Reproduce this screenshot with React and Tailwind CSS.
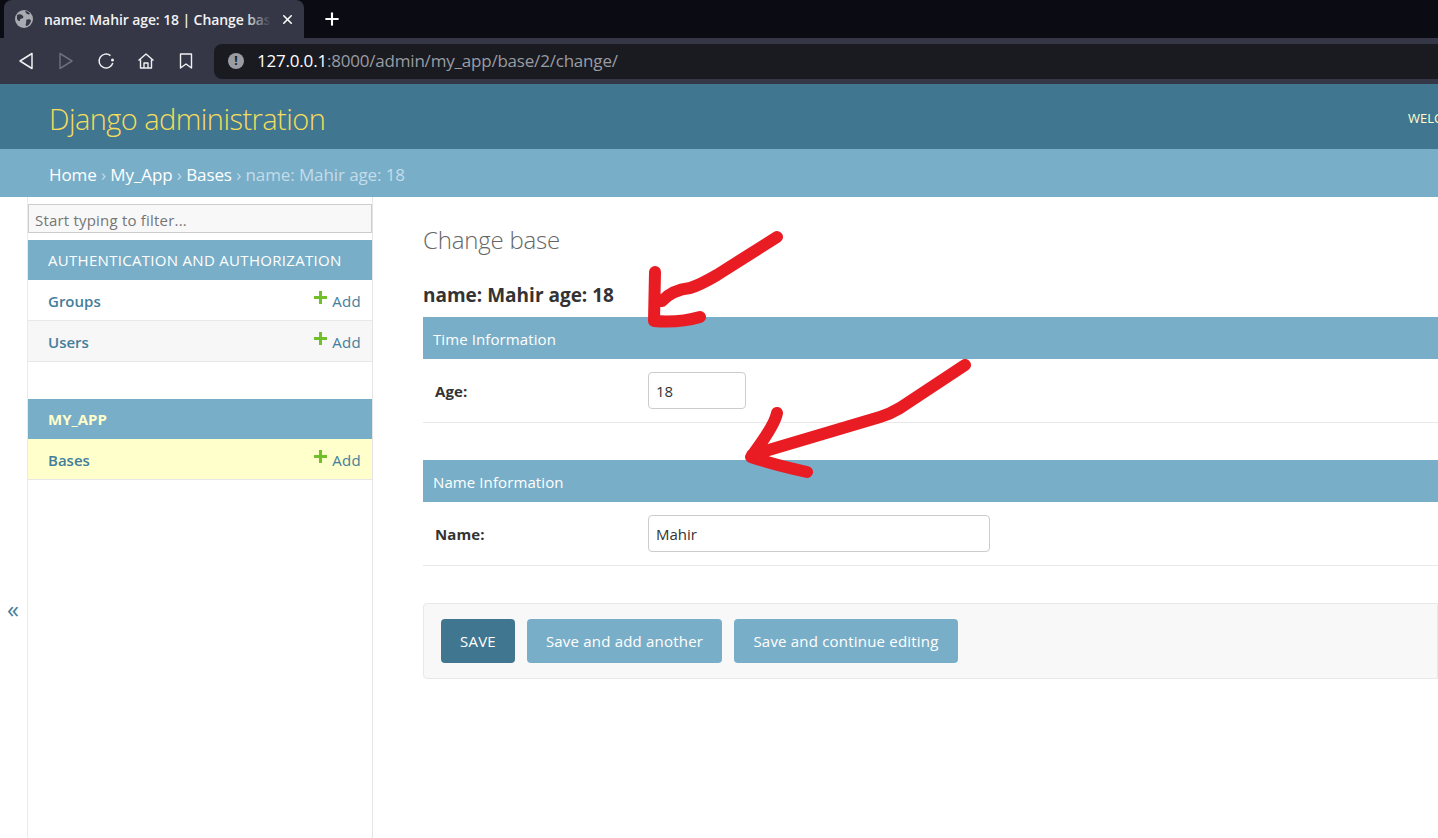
import { X, Plus } from "lucide-react";

const font = "font-['Open_Sans','Noto_Sans',sans-serif]";

function Toolbar() {
  return (
    <div>
      {/* Tab strip */}
      <div className="h-[38px] bg-[#0b0b14] flex items-end pl-1">
        <div className="w-[300px] h-[38px] bg-[#353746] rounded-t-lg flex items-center pl-[11px] pr-[9px]">
          <svg width="18" height="18" viewBox="0 0 18 18" className="shrink-0">
            <circle cx="9" cy="9" r="9" fill="#a9abb2" />
            <path d="M2 5c2-1 4-1 5 0s2 2 1 3-3 0-3 2-2 1-3-1zM11 10c2-1 5-1 5 1-1 3-3 5-5 5-1-2 1-3 0-6zM10 1c2 0 4 1 5 3-2 1-3 0-4-1z" fill="#353746" />
          </svg>
          <div className="relative ml-[11px]">
            <span className="block whitespace-nowrap text-[14px] font-semibold text-[#f2f2f4] tracking-[-0.1px]">
              name: Mahir age: 18 | Change bas
            </span>
            <div className="absolute right-0 top-0 bottom-0 w-[26px] bg-gradient-to-r from-transparent to-[#353746]" />
          </div>
          <X size={15} strokeWidth={2.5} className="ml-auto text-white" />
        </div>
        <Plus size={20} strokeWidth={2.5} className="ml-[18px] mb-[9px] text-white" />
      </div>

      {/* Nav bar */}
      <div className="h-[46px] bg-[#353746] flex items-center pl-[17px]">
        <svg width="18" height="18" viewBox="0 0 18 18" fill="none" stroke="#f0f0f2" strokeWidth="1.5" strokeLinejoin="round">
          <path d="M15 1.500v15L3 9z" />
        </svg>
        <svg width="18" height="18" viewBox="0 0 18 18" fill="none" stroke="#6c6e7b" strokeWidth="1.5" strokeLinejoin="round" className="ml-[22px]">
          <path d="M3 1.500v15L15 9z" />
        </svg>
        <svg width="18" height="18" viewBox="0 0 18 18" fill="none" stroke="#f0f0f2" strokeWidth="1.5" className="ml-[22px]">
          <path d="M13.500 3.600A7 7 0 1 0 15.800 11" />
          <circle cx="15.500" cy="8" r="1.500" fill="#f0f0f2" stroke="none" />
        </svg>
        <svg width="18" height="18" viewBox="0 0 18 18" fill="none" stroke="#f0f0f2" strokeWidth="1.4" strokeLinejoin="round" className="ml-[22px]">
          <path d="M1.500 8.500 9 2l7.500 6.500M3.500 7.500V16h11V7.500M7 16v-5h4v5" />
        </svg>
        <svg width="18" height="18" viewBox="0 0 18 18" fill="none" stroke="#f0f0f2" strokeWidth="1.4" strokeLinejoin="round" className="ml-[22px]">
          <path d="M3.500 2h11v14L9 12l-5.500 4z" />
        </svg>
        <div className="ml-[19px] flex-1 h-[35px] bg-[#191b21] rounded-l-lg flex items-center pl-[14px]">
          <span className="w-4 h-4 rounded-full bg-[#9a9ca4] text-[#191b21] text-[12px] font-bold flex items-center justify-center">!</span>
          <span className="ml-[13px] text-[17px] text-white tracking-[-0.2px]">
            127.0.0.1<span className="text-[#9a9ca4]">:8000/admin/my_app/base/2/change/</span>
          </span>
        </div>
      </div>
    </div>
  );
}

function ModelRow({ name, bg = "bg-white" }) {
  return (
    <div className={`h-[41px] ${bg} border-b border-[#e8e8e8] flex items-center justify-between pt-[2px] pl-5 pr-[11px] text-[#447e9b] text-[15px]`}>
      <span className="font-semibold">{name}</span>
      <span className="flex items-center tracking-[0.3px]">
        <svg width="13" height="13" viewBox="0 0 13 13" className="mr-[5px] -mt-[7px]" fill="#70bf2b">
          <path d="M5 0h3v5h5v3H8v5H5V8H0V5h5z" />
        </svg>
        Add
      </span>
    </div>
  );
}

function Sidebar() {
  return (
    <div className="flex shrink-0">
      <div className="w-[28px] border-r border-[#eaeaea] bg-white flex items-center justify-center text-[#447e9b] text-[24px] pt-[182px] pr-[1px]">
        «
      </div>
      <div className="w-[345px] border-r border-[#e4e4e4] bg-white pt-[7px]">
        <div className="h-[29px] bg-[#f8f8f8] border border-[#cccccc] flex items-center pl-[6px] pt-[4px] text-[15px] text-[#757575] tracking-[0.2px]">
          Start typing to filter...
        </div>
        <div className="mt-[7px] h-10 bg-[#79aec8] flex items-center pl-5 text-white text-[15px] tracking-[0.3px]">
          AUTHENTICATION AND AUTHORIZATION
        </div>
        <ModelRow name="Groups" />
        <ModelRow name="Users" bg="bg-[#f7f7f7]" />
        <div className="mt-[37px] h-10 bg-[#79aec8] flex items-center pl-5 text-[#ffffcc] text-[15px] font-bold">
          MY_APP
        </div>
        <ModelRow name="Bases" bg="bg-[#ffffcc]" />
      </div>
    </div>
  );
}

function Fieldset({ title, label, value, inputWidth, className = "" }) {
  return (
    <div className={className}>
      <div className="h-[42px] bg-[#79aec8] flex items-center pl-[10px] pt-[2px] text-white text-[15px] tracking-[0.1px]">
        {title}
      </div>
      <div className="h-[64px] border-b border-[#e8e8e8] flex items-center pl-[12px]">
        <span className="w-[213px] pt-[2px] font-bold text-[15px] text-[#333333] tracking-[0.1px]">{label}</span>
        <div className={`${inputWidth} h-[37px] border border-[#cccccc] rounded bg-white flex items-center pl-[7px] pt-[2px] text-[15px] text-[#333333]`}>
          {value}
        </div>
      </div>
    </div>
  );
}

function Arrows() {
  return (
    <svg className="absolute left-0 top-0 pointer-events-none" width="1438" height="838" fill="none" stroke="#e91c23" strokeWidth="12" strokeLinecap="round" strokeLinejoin="round">
      <path d="M777 237 L717 275 Q700 285 690 288 Q672 290 662 301 M655 272 L654 321 Q680 323 700 317" />
      <path d="M965 365 L900 408 Q890 414 880 417 L752 455 M777 413 Q775 425 751 457 Q775 465 807 472" />
    </svg>
  );
}

export default function App() {
  return (
    <div className={`relative w-[1438px] h-[838px] overflow-hidden bg-white ${font}`}>
      <Toolbar />

      {/* Django header */}
      <div className="h-[65px] bg-[#417690] flex items-center justify-between pt-[4px] pl-[49px] -mr-[120px]">
        <span className="text-[29px] font-light text-[#f5dd5d] tracking-[-0.55px]">Django administration</span>
        <span className="text-[13px] text-[#ffffcc] w-[150px] whitespace-nowrap">WELCOME, ADMIN</span>
      </div>

      {/* Breadcrumbs */}
      <div className="h-[48px] bg-[#79aec8] flex items-center pt-[4px] pl-[49px] text-[17px] text-white tracking-[-0.1px] whitespace-pre">
        Home<span className="text-[#c4dce8]"> › </span>My_App<span className="text-[#c4dce8]"> › </span>Bases<span className="text-[#c4dce8]"> › name: Mahir age: 18</span>
      </div>

      <div className="flex h-[641px]">
        <Sidebar />
        <div className="flex-1 pl-[50px] min-w-0">
          <h1 className="mt-[24px] h-[38px] text-[24px] leading-[38px] font-light text-[#666666] tracking-[-0.2px]">Change base</h1>
          <h2 className="mt-[21px] h-[37px] text-[19px] leading-[30px] font-bold text-[#333333]">name: Mahir age: 18</h2>
          <Fieldset title="Time Information" label="Age:" value="18" inputWidth="w-[98px]" />
          <Fieldset title="Name Information" label="Name:" value="Mahir" inputWidth="w-[342px]" className="mt-[37px]" />

          {/* Submit row */}
          <div className="mt-[37px] h-[76px] bg-[#f8f8f8] border border-[#e8e8e8] rounded-l flex items-center pl-[17px] gap-3 text-white text-[15px] tracking-[0.2px]">
            <div className="w-[74px] h-[44px] bg-[#417690] rounded flex items-center justify-center">SAVE</div>
            <div className="w-[195px] h-[44px] bg-[#79aec8] rounded flex items-center justify-center">Save and add another</div>
            <div className="w-[224px] h-[44px] bg-[#79aec8] rounded flex items-center justify-center">Save and continue editing</div>
          </div>
        </div>
      </div>

      <Arrows />
    </div>
  );
}
